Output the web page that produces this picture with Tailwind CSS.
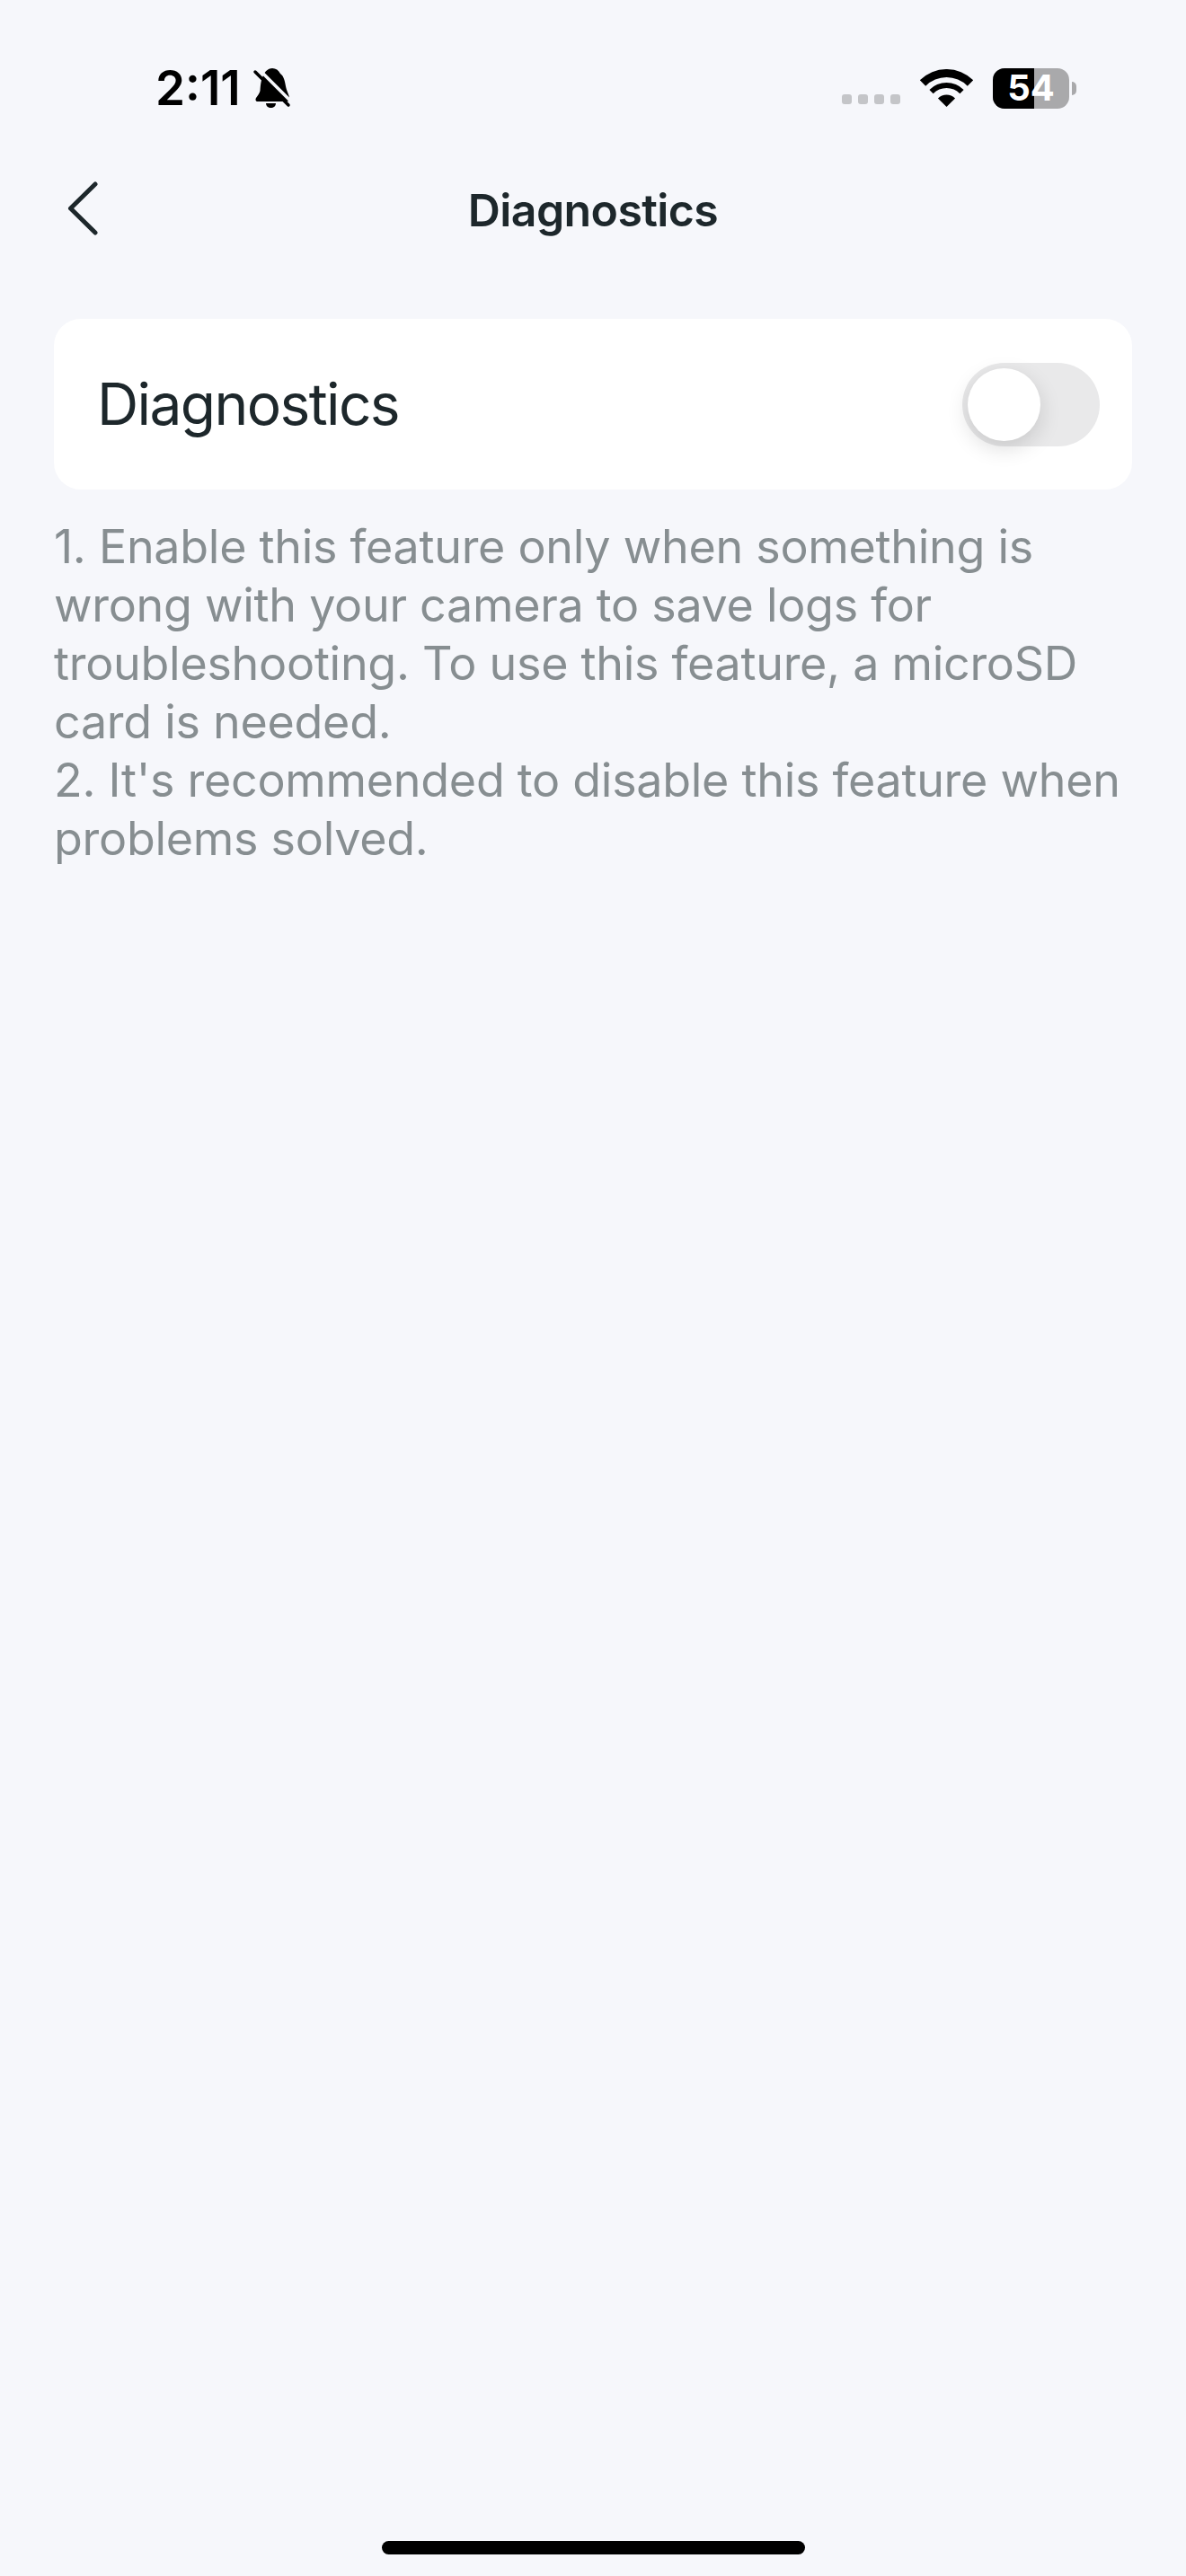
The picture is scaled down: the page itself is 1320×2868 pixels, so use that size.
<!DOCTYPE html>
<html lang="en">
<head>
    <meta charset="UTF-8">
    <meta name="viewport" content="width=device-width, initial-scale=1.0">
    <title>Diagnostics</title>
    <script src="https://cdn.jsdelivr.net/npm/@tailwindcss/browser@4"></script>
</head>
<body class="bg-[#f6f7fb] font-['Inter',sans-serif]">
    <div class="relative h-[2868px] w-[1320px] overflow-hidden">
        <!-- Status bar -->
        <div class="flex h-[196px] items-center justify-between pl-[173px] pr-[122px] text-black">
            <div class="flex items-center gap-[13px]">
                <span class="text-[53px] font-semibold leading-none">2:11</span>
                <svg class="h-[45px] w-[44px]" viewBox="0 0 44 45" fill="currentColor">
                    <path d="M22 0C26 0 29 2 31 6C35 9 36 14 37 20C38 26 41 29 41 34C41 36 40 37 38 37H6C3.500 37 3 35 4 33C6 30 8 28 8.500 25C9 20 9 14 12 8C14 3 18 0 22 0Z"></path>
                    <path d="M15 39H26C26 42 23.500 44 20.500 44C17.500 44 15 42 15 39Z"></path>
                    <path d="M6.500 0.500L44 38" stroke="#f6f7fb" stroke-width="3.500" fill="none"></path>
                    <path d="M3 4L40 41" stroke="currentColor" stroke-width="3.500" stroke-linecap="round" fill="none"></path>
                </svg>
            </div>
            <div class="flex items-center">
                <div class="mr-[21px] mt-[24px] flex gap-[7px]">
                    <span class="h-[11px] w-[11px] rounded-[3px] bg-[#c4c5c8]"></span>
                    <span class="h-[11px] w-[11px] rounded-[3px] bg-[#c4c5c8]"></span>
                    <span class="h-[11px] w-[11px] rounded-[3px] bg-[#c4c5c8]"></span>
                    <span class="h-[11px] w-[11px] rounded-[3px] bg-[#c4c5c8]"></span>
                </div>
                <svg class="h-[42px] w-[61px]" viewBox="-2 0 61 42" fill="currentColor">
                    <path d="M-1.200 12.300A42 42 0 0 1 58.200 12.300L51.800 18.700A33 33 0 0 0 5.200 18.700Z"></path>
                    <path d="M9.400 22.900A27 27 0 0 1 47.600 22.900L43.350 27.150A21 21 0 0 0 13.650 27.150Z"></path>
                    <path d="M18.950 32.450A13.500 13.500 0 0 1 38.050 32.450L28.500 42Z"></path>
                </svg>
                <div class="ml-[21px] flex items-center">
                    <div class="relative flex h-[45px] w-[85px] rounded-[13px] bg-[#a9a9ab]">
                        <div class="h-full w-[46px] rounded-l-[13px] bg-black"></div>
                        <span class="absolute inset-0 flex items-center justify-center text-[40px] font-bold leading-none text-white">54</span>
                    </div>
                    <div class="ml-[3px] h-[15px] w-[5px] rounded-r-full bg-[#a9a9ab]"></div>
                </div>
            </div>
        </div>

        <!-- Nav header -->
        <header class="grid h-[76px] grid-cols-[1fr_auto_1fr] items-center px-[60px]">
            <svg class="ml-[14px] h-[64px] w-[36px]" viewBox="0 0 36 64" fill="none" stroke="#1d272b" stroke-width="5" stroke-linecap="round" stroke-linejoin="round">
                <path d="M32 3L4.500 30L32 57"></path>
            </svg>
            <h1 class="text-[50px] font-semibold leading-none tracking-[-0.6px] text-[#1d272b]">Diagnostics</h1>
            <div></div>
        </header>

        <main class="mt-[83px] px-[60px]">
            <div class="flex h-[190px] items-center justify-between rounded-[30px] bg-white pl-[48px] pr-[36px]">
                <span class="text-[64px] leading-none tracking-[-1.600px] text-[#1d272b]">Diagnostics</span>
                <div class="relative h-[93px] w-[153px] rounded-full bg-[#e9e9ea]">
                    <div class="absolute left-[6px] top-[6px] h-[81px] w-[81px] rounded-full bg-white shadow-[0_8px_24px_rgba(0,0,0,0.14)]"></div>
                </div>
            </div>
            <div class="mt-[31px] text-[52px] leading-[65px] tracking-[-0.280px] text-[#878e91]">
                <p>1. Enable this feature only when something is wrong with your camera to save logs for troubleshooting. To use this feature, a microSD card is needed.</p>
                <p>2. It's recommended to disable this feature when problems solved.</p>
            </div>
        </main>

        <!-- Home indicator -->
        <div class="absolute bottom-[24px] left-[425px] h-[15px] w-[471px] rounded-full bg-black"></div>
    </div>
</body>
</html>
